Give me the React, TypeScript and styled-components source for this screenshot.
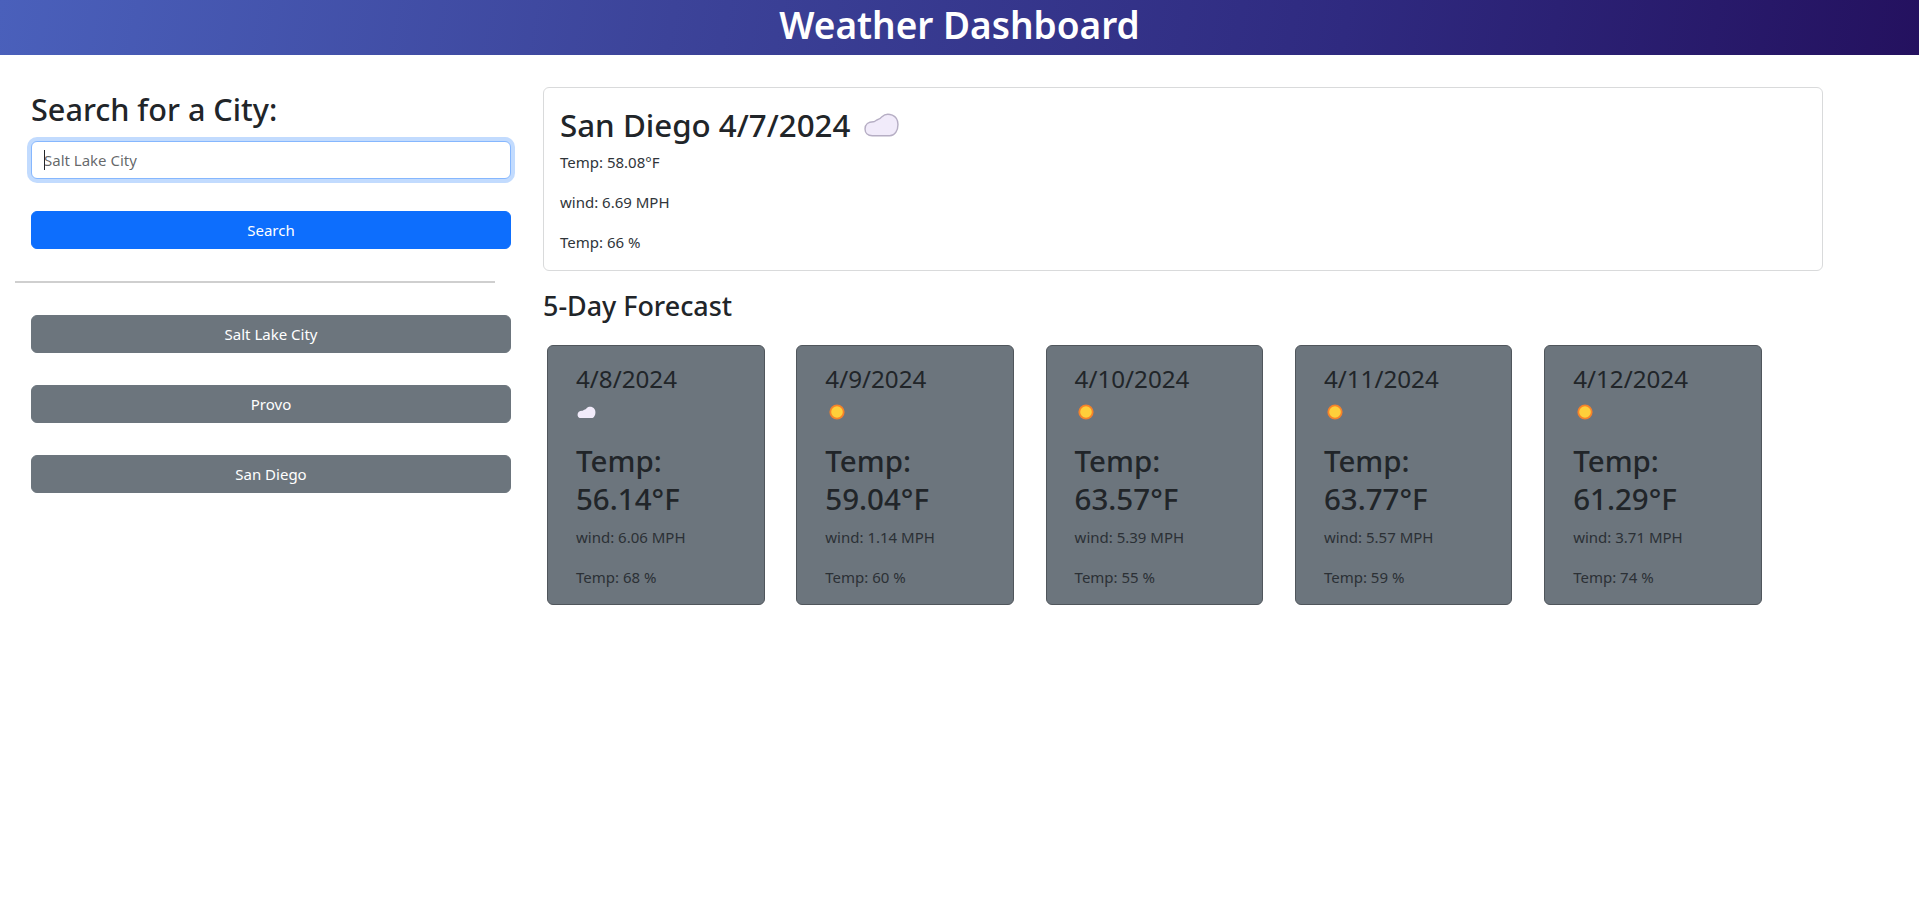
import styled, { createGlobalStyle } from "styled-components";

const GlobalStyle = createGlobalStyle`
  * {
    box-sizing: border-box;
  }
  body {
    margin: 0;
    background: #fff;
    color: #212529;
    font-family: "Noto Sans", "Open Sans", sans-serif;
    font-size: 15px;
    line-height: 24px;
  }
`;

const Header = styled.header`
  height: 55px;
  background: linear-gradient(100deg, #4a60bb 0%, #3c4399 35%, #2f2a80 70%, #24115f 100%);
  color: #fff;
  text-align: center;
`;

const Title = styled.h1`
  margin: 0;
  font-size: 37px;
  line-height: 50px;
  font-weight: 600;
`;

const Main = styled.main`
  display: flex;
  align-items: flex-start;
  padding: 32px 0 0 31px;
`;

const Sidebar = styled.aside`
  width: 480px;
  flex-shrink: 0;
  margin-right: 32px;
`;

const SearchTitle = styled.h2`
  margin: 3px 0 13px;
  font-size: 30.6px;
  line-height: 38px;
  font-weight: 500;
`;

const InputWrap = styled.div`
  position: relative;
`;

const CityInput = styled.input`
  display: block;
  width: 100%;
  height: 38px;
  padding: 6px 12px;
  border: 1px solid #86b7fe;
  border-radius: 6px;
  outline: 0;
  box-shadow: 0 0 0 4px rgba(13, 110, 253, 0.25);
  font: inherit;
  color: #212529;
  &::placeholder {
    color: rgba(33, 37, 41, 0.7);
  }
`;

// the caret sits on top of the placeholder, the way a focused field shows it
const Caret = styled.span`
  position: absolute;
  top: 9px;
  left: 13px;
  width: 1px;
  height: 20px;
  background: #212529;
`;

const ActionButton = styled.button<{ $primary?: boolean }>`
  display: block;
  width: 100%;
  height: 38px;
  margin-top: 32px;
  border: 1px solid ${(p) => (p.$primary ? "#0d6efd" : "#6c757d")};
  border-radius: 6px;
  background: ${(p) => (p.$primary ? "#0d6efd" : "#6c757d")};
  color: #fff;
  font: inherit;
`;

const Divider = styled.hr`
  width: 480px;
  height: 2px;
  margin: 32px 0 0 -16px;
  border: 0;
  background: #cfcfcf;
`;

const Content = styled.section`
  width: 1280px;
  flex-shrink: 0;
`;

const CurrentCard = styled.div`
  height: 184px;
  padding: 16px;
  border: 1px solid #d9dadb;
  border-radius: 6px;
`;

const CurrentTitle = styled.h2`
  display: flex;
  align-items: center;
  gap: 14px;
  margin: 2px 0 6px;
  font-size: 31.3px;
  line-height: 38px;
  font-weight: 500;
`;

const Line = styled.p<{ $muted?: boolean }>`
  margin: 0 0 16px;
  color: ${(p) => (p.$muted ? "#2b3035" : "#30353a")};
  &:last-child {
    margin-bottom: 0;
  }
`;

const ForecastTitle = styled.h3`
  margin: 18px 0 22px;
  font-size: 26.9px;
  line-height: 34px;
  font-weight: 500;
`;

const ForecastRow = styled.div`
  display: flex;
  gap: 31.8px;
  padding-left: 4px;
`;

const ForecastCard = styled.article`
  width: 217.5px;
  height: 260px;
  padding: 18px 16px 16px 28px;
  border: 1px solid #50565c;
  border-radius: 6px;
  background: #6c757d;
`;

const DateText = styled.h4`
  margin: 0 0 9px;
  font-size: 24.2px;
  line-height: 29px;
  font-weight: 400;
`;

const IconSlot = styled.div`
  height: 20px;
  margin-bottom: 19.5px;
  padding-left: 1px;
  display: flex;
  align-items: center;
`;

const TempText = styled.h2`
  margin: 0 0 7px;
  font-size: 29.5px;
  line-height: 38.4px;
  font-weight: 500;
`;

function Cloud({ size, outline }: { size: number; outline?: boolean }) {
  return (
    <svg width={size} height={size * 0.68} viewBox="0 0 34 23">
      <path
        d="M8 22C3.5 22 1 19 1 15.5C1 11 4.5 8.5 9 8.5C10.5 8.5 11.5 7 13 6.5C15 6 16 5.5 17.5 3.5C20 1 24 0.8 27.5 2C31 3.5 33 6.5 33 11C33 17 30 22 25 22Z"
        fill="#f1ebfa"
        stroke={outline ? "#b6aec4" : "none"}
        strokeWidth="1.4"
      />
    </svg>
  );
}

function Sun() {
  return (
    <svg width="16" height="16" viewBox="0 0 16 16" style={{ marginLeft: 2.5 }}>
      <circle cx="8" cy="8" r="7.6" fill="#f5822a" />
      <circle cx="8" cy="8" r="5.8" fill="#ffcf3a" />
    </svg>
  );
}

type Day = { date: string; icon: "cloud" | "sun"; temp: string; wind: string; humidity: string };

const days: Day[] = [
  { date: "4/8/2024", icon: "cloud", temp: "56.14", wind: "6.06", humidity: "68" },
  { date: "4/9/2024", icon: "sun", temp: "59.04", wind: "1.14", humidity: "60" },
  { date: "4/10/2024", icon: "sun", temp: "63.57", wind: "5.39", humidity: "55" },
  { date: "4/11/2024", icon: "sun", temp: "63.77", wind: "5.57", humidity: "59" },
  { date: "4/12/2024", icon: "sun", temp: "61.29", wind: "3.71", humidity: "74" },
];

const cities = ["Salt Lake City", "Provo", "San Diego"];

export default function App() {
  return (
    <>
      <GlobalStyle />
      <Header>
        <Title>Weather Dashboard</Title>
      </Header>
      <Main>
        <Sidebar>
          <SearchTitle>Search for a City:</SearchTitle>
          <InputWrap>
            <CityInput placeholder="Salt Lake City" />
            <Caret />
          </InputWrap>
          <ActionButton $primary>Search</ActionButton>
          <Divider />
          {cities.map((city) => (
            <ActionButton key={city}>{city}</ActionButton>
          ))}
        </Sidebar>
        <Content>
          <CurrentCard>
            <CurrentTitle>
              San Diego 4/7/2024
              <Cloud size={35} outline />
            </CurrentTitle>
            <Line>Temp: 58.08°F</Line>
            <Line>wind: 6.69 MPH</Line>
            <Line>Temp: 66 %</Line>
          </CurrentCard>
          <ForecastTitle>5-Day Forecast</ForecastTitle>
          <ForecastRow>
            {days.map((day) => (
              <ForecastCard key={day.date}>
                <DateText>{day.date}</DateText>
                <IconSlot>{day.icon === "cloud" ? <Cloud size={19} /> : <Sun />}</IconSlot>
                <TempText>Temp: {day.temp}°F</TempText>
                <Line $muted>wind: {day.wind} MPH</Line>
                <Line $muted>Temp: {day.humidity} %</Line>
              </ForecastCard>
            ))}
          </ForecastRow>
        </Content>
      </Main>
    </>
  );
}
